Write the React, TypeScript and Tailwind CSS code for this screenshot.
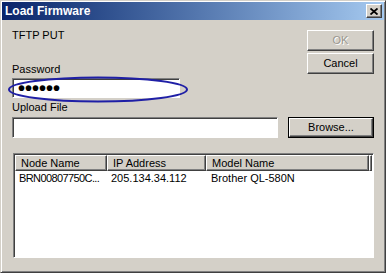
import React from 'react';

const raised =
  'border border-t-white border-l-white border-r-[#404040] border-b-[#404040] shadow-[inset_-1px_-1px_0_#808080]';
const sunken =
  'border border-t-[#808080] border-l-[#808080] border-r-white border-b-white shadow-[inset_1px_1px_0_#404040]';

function Button({ label, disabled, def }: { label: string; disabled?: boolean; def?: boolean }) {
  const inner = (
    <div
      className={`flex h-full w-full items-center justify-center ${raised} ${
        disabled ? 'text-[#9a978f] [text-shadow:1px_1px_0_#ffffff]' : 'text-black'
      }`}
    >
      {label}
    </div>
  );
  if (def) {
    return <div className="h-[21px] w-[86px] border border-black">{inner}</div>;
  }
  return <div className="h-[21px] w-[67px]">{inner}</div>;
}

export default function App() {
  const columns = [
    { name: 'Node Name', width: 'w-[92px]' },
    { name: 'IP Address', width: 'w-[99px]' },
    { name: 'Model Name', width: 'w-[163px]' },
  ];

  return (
    <div
      className="relative flex h-[273px] w-[386px] flex-col border border-t-[#d4d0c8] border-l-[#d4d0c8] border-r-[#404040] border-b-[#404040] bg-[#d4d0c8] p-[1px] text-[11px] text-black shadow-[inset_1px_1px_0_#ffffff,inset_-1px_-1px_0_#808080]"
      style={{ fontFamily: '"Liberation Sans", Arial, sans-serif' }}
    >
      {/* title bar */}
      <div className="flex h-[18px] items-center justify-between bg-linear-to-r from-[#0a246a] to-[#a6caf0] pl-[3px] pr-[2px]">
        <span className="text-[12px] font-bold text-white">Load Firmware</span>
        <div className={`flex h-[14px] w-[16px] items-center justify-center bg-[#d4d0c8] ${raised}`}>
          <svg width="8" height="7" viewBox="0 0 8 7">
            <path d="M0.5 0.5 L7.5 6.5 M7.5 0.5 L0.5 6.5" stroke="black" strokeWidth="1.8" />
          </svg>
        </div>
      </div>

      {/* body */}
      <div className="flex flex-1 flex-col pl-[10px] pr-[10px]">
        <div className="flex items-start justify-between">
          <div className="flex flex-col">
            <div className="mt-[9px] leading-[13px]">TFTP PUT</div>
            <div className="mt-[21px] leading-[13px]">Password</div>
            <div className={`mt-[2px] flex h-[20px] w-[168px] items-center bg-white pl-[5px] ${sunken}`}>
              <span className="text-[20px] font-bold leading-none">••••••</span>
            </div>
          </div>
          <div className="mt-[10px] flex flex-col gap-[2px]">
            <Button label="OK" disabled />
            <Button label="Cancel" />
          </div>
        </div>

        <div className="mt-[3px] leading-[13px]">Upload File</div>
        <div className="mt-[3px] flex items-start justify-between">
          <div className={`h-[21px] w-[266px] bg-white ${sunken}`} />
          <Button label="Browse..." def />
        </div>

        {/* list view */}
        <div className={`ml-[1px] mt-[15px] flex h-[105px] flex-col bg-white ${sunken} p-[1px]`}>
          <div className="flex h-[16px] bg-[#d4d0c8]">
            {columns.map(c => (
              <div key={c.name} className={`${c.width} flex items-center pl-[5px] ${raised}`}>
                {c.name}
              </div>
            ))}
            <div className={`flex-1 ${raised}`} />
          </div>
          <div className="flex h-[15px] items-center">
            <div className="w-[92px] pl-[4px] tracking-[-0.6px]">BRN00807750C...</div>
            <div className="w-[99px] pl-[4px]">205.134.34.112</div>
            <div className="w-[163px] pl-[5px]">Brother QL-580N</div>
          </div>
        </div>
      </div>

      {/* annotation ellipse */}
      <svg className="absolute left-[6px] top-[75px]" width="182" height="27" viewBox="0 0 182 27">
        <ellipse cx="91" cy="13.5" rx="89" ry="12" fill="none" stroke="#1f1fa6" strokeWidth="2" />
      </svg>
    </div>
  );
}
